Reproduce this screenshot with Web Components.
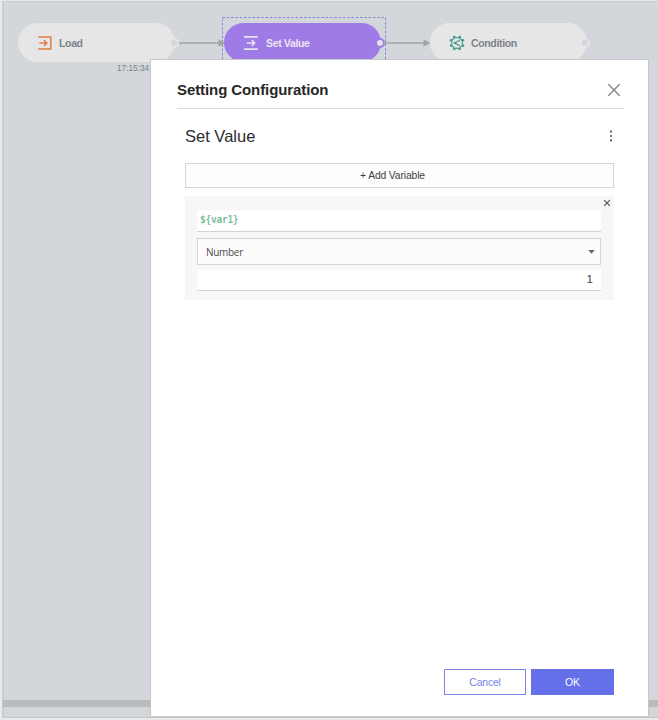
<!DOCTYPE html>
<html lang="en">
<head>
<meta charset="utf-8">
<title>Setting Configuration</title>
<style>
html,body{margin:0;height:720px;overflow:hidden}
body{font-family:"Liberation Sans",Arial,sans-serif;background:#e9eaea}
</style>
</head>
<body>
<flow-editor></flow-editor>
<script>
const define = (name, html) => customElements.define(name, class extends HTMLElement {
  constructor() {
    super();
    const t = document.createElement('template');
    t.innerHTML = html;
    this.attachShadow({mode: 'open'}).appendChild(t.content.cloneNode(true));
  }
});

define('flow-node', `
<style>
:host{display:flex;align-items:center;box-sizing:border-box;width:157px;height:39px;border-radius:20px;background:#e6e6e6;color:#7d8289;padding-left:19px;gap:6px;font:bold 10.5px/14px "Liberation Sans",Arial,sans-serif;--port:#d3d6db;--ring:#e6e6e6}
:host([selected]){background:#9f7be7;color:#ebe5f3;--port:#e3e2e8;--ring:#9f7be7;gap:7px}
.port{position:absolute;right:var(--port-offset,-4px);top:15px;width:6px;height:6px;border:2px solid var(--ring);border-radius:50%;background:var(--port)}
::slotted(svg){display:block;flex:none}
.label{padding-top:1px;letter-spacing:-.35px}
</style>
<slot name="icon"></slot><span class="label"><slot></slot></span><i class="port"></i>`);

define('flow-arrow', `
<style>:host{display:block;width:48px;height:8px}svg{display:block}</style>
<svg width="48" height="8"><path d="M0 4H43" stroke="#a1a5a3" stroke-width="1.7"/><path d="M39.5 0.2L46.5 4L39.5 7.8Z" fill="#a1a5a3"/></svg>`);

define('flow-canvas', `
<style>
:host{display:block;position:relative;box-sizing:border-box;height:717px;margin-left:2px;border-left:2px solid #cbcdcf;border-top:1px solid #cbcdcf;border-bottom:1px solid #c6c7c9;background:#d3d7dc}
.bar{position:absolute;left:-1px;right:0;bottom:10px;height:7px;background:#babbbd}
flow-node,flow-arrow,.sel,time{position:absolute}
.sel{left:218px;top:15px}
time{left:113px;top:61px;font-size:8.2px;line-height:11px;color:#7b8087;letter-spacing:.03px}
</style>
<svg class="sel" width="164" height="60"><rect x=".5" y=".5" width="163" height="58" fill="none" stroke="#8186cd" stroke-dasharray="2.5 1.8"/></svg>
<flow-node style="left:14px;top:21px">
<svg slot="icon" width="16" height="16" viewBox="0 0 16 16" fill="none" stroke="#dc7f42" stroke-width="1.5"><path d="M1.2 1.9H13.8V14.1H1.2M2.4 8H9.9M7 5.1L9.9 8L7 10.9"/></svg>Load</flow-node>
<flow-arrow style="left:175px;top:37px"></flow-arrow>
<flow-node selected style="left:220px;top:21px">
<svg slot="icon" width="16" height="16" viewBox="0 0 16 16" fill="none" stroke="#e9e3f2" stroke-width="1.6"><path d="M1.2 1.9H14.8M1.2 14.1H14.8M3.8 8H11.4M8.8 5.1L11.7 8L8.8 10.9"/></svg>Set Value</flow-node>
<flow-arrow style="left:380px;top:37px"></flow-arrow>
<flow-node style="left:426px;top:21px;--port-offset:-3px">
<svg slot="icon" width="16" height="16" viewBox="0 0 16 16" fill="none" stroke="#58a69a" stroke-width="1.4"><path d="M5.4 2.3L8 2.9L10.6 2.3L11.7 4.3L13.7 5.4L13.1 8L13.7 10.6L11.7 11.7L10.6 13.7L8 13.1L5.4 13.7L4.3 11.7L2.3 10.6L2.9 8L2.3 5.4L4.3 4.3Z" stroke-width="1.2"/><path d="M11 5.2L5.8 8L11 10.8"/><g fill="#489d90" stroke="none"><circle cx="5.3" cy="2.2" r="1.4"/><circle cx="10.7" cy="2.2" r="1.4"/><circle cx="13.8" cy="5.3" r="1.4"/><circle cx="13.8" cy="10.7" r="1.4"/><circle cx="10.7" cy="13.8" r="1.4"/><circle cx="5.3" cy="13.8" r="1.4"/><circle cx="2.2" cy="10.7" r="1.4"/><circle cx="2.2" cy="5.3" r="1.4"/><circle cx="6" cy="8" r="1.2"/></g></svg>Condition</flow-node>
<time>17:15:34</time>
<div class="bar"></div>`);

define('ui-button', `
<style>
:host{display:flex;align-items:center;justify-content:center;box-sizing:border-box;width:82px;height:26px;border:1px solid #7c84ea;background:#fff;color:#7a82e8;font-size:10.5px;line-height:14px;letter-spacing:-.2px}
:host([primary]){width:83px;background:#646fe9;border-color:#6770e5;color:#fff}
:host([wide]){width:auto;height:25px;padding-right:14px;border-color:#d6d6d6;background:#fdfdfd;color:#3e3e3e;font-size:10.3px;letter-spacing:-.12px}
</style><slot></slot>`);

define('variable-card', `
<style>
:host{display:flex;flex-direction:column;box-sizing:border-box;height:104px;background:#f7f7f7;padding:0 13px 0 12px}
.top{height:14px;display:flex;justify-content:flex-end;margin-right:-10px}
.top svg{display:block;margin-top:3px}
.field{box-sizing:border-box;height:22px;background:#fff;border-bottom:1px solid #d4d4d4;display:flex;align-items:center}
.name{color:#7fbf9e;font:bold 9.6px/14px "DejaVu Sans Mono",monospace;letter-spacing:-.3px;padding:0 0 2px 3px}
.select{box-sizing:border-box;height:27px;margin:6px 0 5px;border:1px solid #d4d4d4;background:#fcfcfc;display:flex;align-items:center;justify-content:space-between;padding:0 5px 0 8px;font:10px/14px "Open Sans","Noto Sans",sans-serif;letter-spacing:-.3px;color:#4c4c4c}
.num{height:21px;justify-content:flex-end;padding:0 8px 2px 0;font:11.5px/14px "Liberation Sans",sans-serif;color:#3c4147}
</style>
<div class="top"><svg width="8" height="8" viewBox="0 0 8 8"><path d="M1.2 1.2L6.8 6.8M6.8 1.2L1.2 6.8" stroke="#555" stroke-width="1.2"/></svg></div>
<div class="field name"><slot name="name"></slot></div>
<div class="select"><slot name="type"></slot><svg width="7" height="4"><path d="M.3 0H6.7L3.5 3.8Z" fill="#666"/></svg></div>
<div class="field num"><slot name="value"></slot></div>`);

define('config-dialog', `
<style>
:host{display:flex;flex-direction:column;box-sizing:border-box;background:#fff;border:1px solid #c5c7c9;padding:0 24px 21px 26px}
header{display:flex;justify-content:space-between;align-items:center;box-sizing:border-box;height:49px;padding:11px 3px 0 0;border-bottom:1px solid #dcdcdc}
h1{margin:0;font-size:15px;line-height:20px;color:#272727;letter-spacing:-.09px}
main{flex:1;padding:16px 10px 0 8px}
.row{display:flex;justify-content:space-between;align-items:center;height:22px;margin-bottom:16px}
h2{margin:0;font-weight:400;font-size:16.5px;line-height:22px;color:#2c2c2c}
.row svg{margin-right:1px}
variable-card{margin-top:8px}
footer{display:flex;justify-content:flex-end;gap:5px;padding-right:10px}
</style>
<header><h1>Setting Configuration</h1><svg width="14" height="14" viewBox="0 0 14 14"><path d="M1.3 1.3L12.7 12.7M12.7 1.3L1.3 12.7" stroke="#858585" stroke-width="1.4"/></svg></header>
<main>
<div class="row"><h2>Set Value</h2><svg width="4" height="12" fill="#555"><circle cx="2" cy="1.6" r="1.05"/><circle cx="2" cy="6" r="1.05"/><circle cx="2" cy="10.4" r="1.05"/></svg></div>
<ui-button wide>+ Add Variable</ui-button>
<variable-card><span slot="name">\${var1}</span><span slot="type">Number</span><span slot="value">1</span></variable-card>
</main>
<footer><ui-button>Cancel</ui-button><ui-button primary>OK</ui-button></footer>`);

define('flow-editor', `
<style>
:host{display:block;position:relative;height:720px;padding-top:1px;box-sizing:border-box;overflow:hidden}
config-dialog{position:absolute;left:150px;top:59px;width:499px;height:658px}
</style>
<flow-canvas></flow-canvas><config-dialog></config-dialog>`);
</script>
</body>
</html>
